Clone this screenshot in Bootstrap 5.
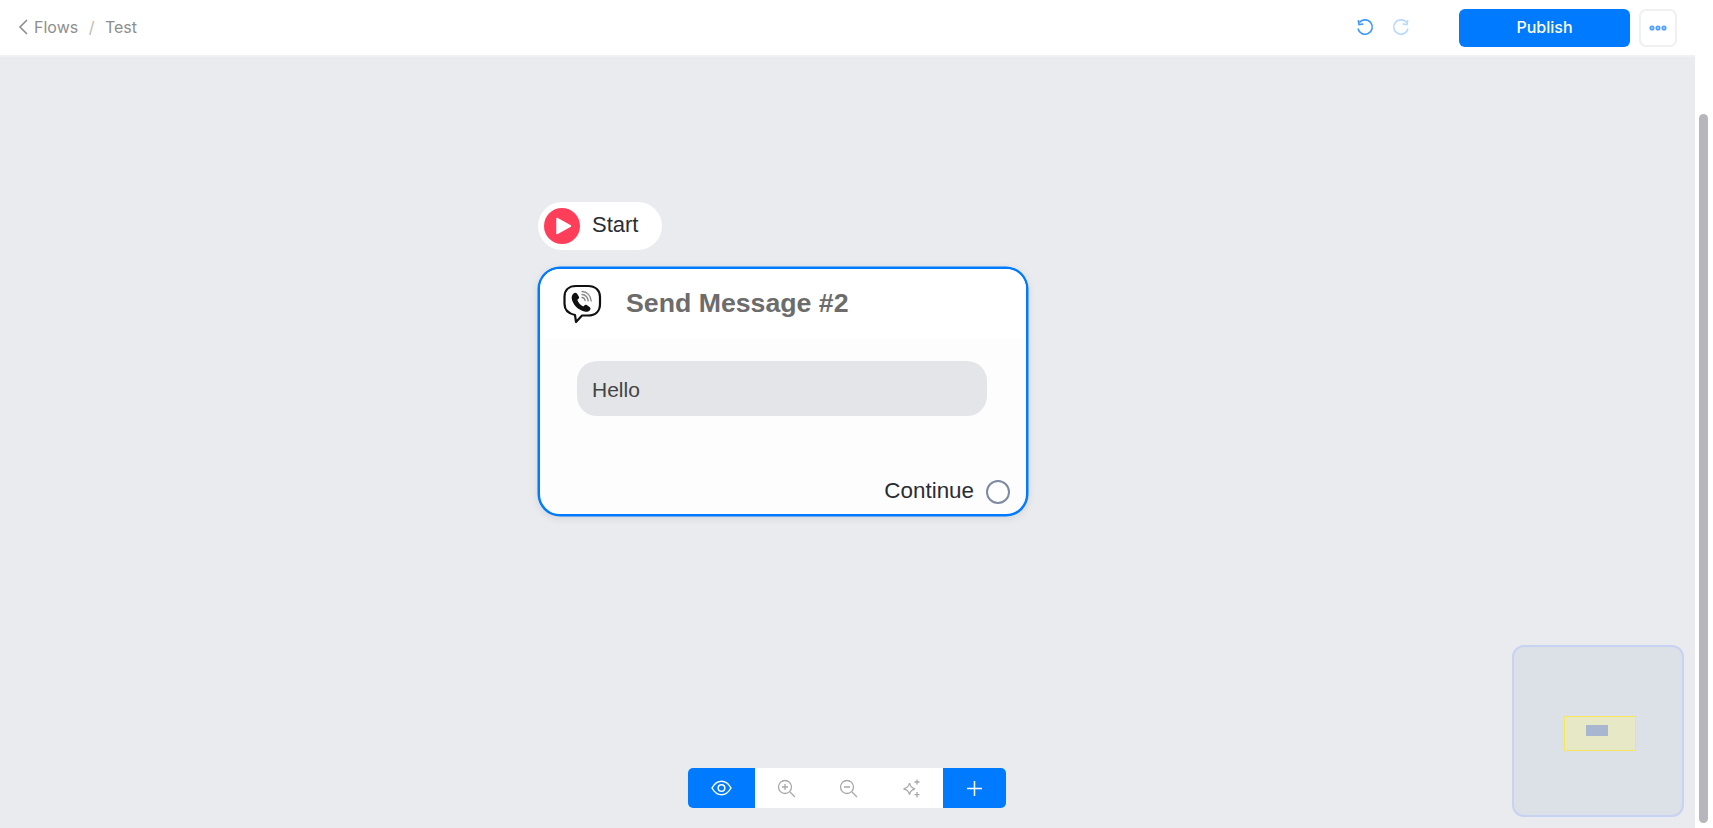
<!DOCTYPE html>
<html lang="en">

<head>
    <meta charset="UTF-8">
    <meta name="viewport" content="width=device-width, initial-scale=1.0">
    <title>Flows - Test</title>
    <link href="https://cdn.jsdelivr.net/npm/bootstrap@5.3.3/dist/css/bootstrap.min.css" rel="stylesheet" crossorigin="anonymous">
    <style>
        body {
            font-family: "Liberation Sans", Arial, sans-serif;
            background-color: #fff;
            overflow: hidden;
        }

        .page-wrap {
            height: 828px;
        }

        .top-bar {
            height: 57px;
            background-color: #fff;
            border-bottom: 2px solid #f1f1f3;
            padding-right: 36px;
        }

        .crumb {
            font-family: Inter, "Liberation Sans", sans-serif;
            font-size: 16px;
            color: #8e8e8e;
            padding-left: 18px;
            padding-bottom: 1px;
        }

        .crumb-back {
            margin-right: 6px;
        }

        .crumb-sep {
            color: #bbb;
            margin: 0 10.500px;
        }

        .history-btns {
            gap: 18px;
            margin-right: 49px;
        }

        .publish-btn {
            width: 171px;
            height: 38px;
            background-color: #007bff;
            color: #fff;
            border: none;
            border-radius: 6px;
            font-family: Inter, "Liberation Sans", sans-serif;
            font-size: 16px;
            font-weight: 500;
            padding: 0 0 2px;
        }

        .more-btn {
            width: 38px;
            height: 38px;
            background-color: #fff;
            border: 2px solid #eef0f3;
            border-radius: 7px;
            padding: 0;
            margin-left: 9px;
        }

        .flow-canvas {
            background-color: #e9ebef;
        }

        .start-node {
            position: absolute;
            left: 538px;
            top: 145px;
            width: 124px;
            height: 48px;
            background-color: #fff;
            border-radius: 24px;
            padding-left: 6px;
            padding-bottom: 4px;
            font-size: 22px;
            color: #2a2d33;
        }

        .start-dot {
            width: 36px;
            height: 36px;
            margin-right: 12px;
            margin-top: 4px;
        }

        .msg-node {
            position: absolute;
            left: 538px;
            top: 210px;
            width: 490px;
            height: 249px;
            background-color: #fdfdfd;
            border: 2px solid #007bff;
            border-radius: 22px;
            box-shadow: 0 0 0 .5px #007bff, 0 2px 8px rgba(0, 0, 0, .1);
        }

        .msg-head {
            padding: 15px 0 0 22px;
            height: 69px;
            background-color: #fff;
            border-radius: 20px 20px 0 0;
        }

        .msg-title {
            font-size: 26.700px;
            font-weight: 700;
            color: #6c6c6c;
            margin-left: 24px;
            line-height: 38px;
        }

        .msg-bubble {
            margin: 23px 0 0 37px;
            width: 410px;
            height: 55px;
            background-color: #e3e5e9;
            border-radius: 20px;
            padding-left: 15px;
            padding-top: 3px;
            font-size: 21px;
            color: #444;
        }

        .msg-foot {
            margin-top: 58px;
            padding-right: 16px;
            font-size: 22.400px;
            color: #2a2d33;
        }

        .foot-label {
            padding-bottom: 2px;
        }

        .port-ring {
            width: 24px;
            height: 24px;
            border: 2px solid #7d8aa0;
            border-radius: 50%;
            background-color: #fff;
            margin-left: 12px;
        }

        .tool-strip {
            position: absolute;
            left: 688px;
            top: 711px;
            width: 318px;
            height: 40px;
            background-color: #fff;
            border-radius: 5px;
            overflow: hidden;
        }

        .tool-blue {
            background-color: #007bff;
            border: none;
            padding: 0;
            height: 40px;
        }

        .tool-plain {
            background: none;
            border: none;
            padding: 0;
            width: 62.600px;
            height: 40px;
        }

        .mini-map {
            position: absolute;
            left: 1512px;
            top: 588px;
            width: 172px;
            height: 172px;
            background-color: #dce0e7;
            border: 2px solid #c8d2f2;
            border-radius: 12px;
        }

        .mini-view {
            position: absolute;
            left: 50px;
            top: 69px;
            width: 72px;
            height: 35px;
            background-color: #e6e8c6;
            border: 1px solid #f7e65c;
        }

        .mini-node {
            position: absolute;
            left: 21px;
            top: 8px;
            width: 22px;
            height: 11px;
            background-color: #a9b6cf;
        }

        .scroll-rail {
            position: absolute;
            top: 0;
            right: 0;
            width: 18px;
            height: 828px;
            background-color: #fff;
        }

        .scroll-thumb {
            position: absolute;
            left: 4px;
            top: 114px;
            width: 9px;
            height: 709px;
            background-color: #b6b6bc;
            border-radius: 5px;
        }
    </style>
</head>

<body>
    <div class="page-wrap d-flex flex-column position-relative">
        <header class="top-bar d-flex align-items-center flex-shrink-0">
            <div class="crumb d-flex align-items-center">
                <svg width="10" height="16" viewBox="0 0 10 16" fill="none" stroke="#8e8e8e" stroke-width="1.600" class="crumb-back"><path d="M9 1 2 8l7 7"/></svg>
                <span>Flows</span><span class="crumb-sep">/</span><span>Test</span>
            </div>
            <div class="ms-auto d-flex align-items-center">
                <div class="history-btns d-flex align-items-center">
                    <svg width="18" height="18" viewBox="0 0 18 18" fill="none" stroke="#3f97ff" stroke-width="1.600"><path d="M3.400 3.600A7.200 7.200 0 1 1 2 9.500"/><path d="M2.300 1.200 3 5.600l4.400-.6"/></svg>
                    <svg width="18" height="18" viewBox="0 0 18 18" fill="none" stroke="#b6d8ff" stroke-width="1.600"><path d="M14.600 3.600A7.200 7.200 0 1 0 16 9.500"/><path d="M15.700 1.200 15 5.600l-4.400-.6"/></svg>
                </div>
                <button class="publish-btn" type="button">Publish</button>
                <button class="more-btn d-flex align-items-center justify-content-center" type="button">
                    <svg width="18" height="6" viewBox="0 0 18 6" fill="#a9cfff" stroke="#4f9fff" stroke-width="1.500"><circle cx="3" cy="3" r="1.800"/><circle cx="9" cy="3" r="1.800"/><circle cx="15" cy="3" r="1.800"/></svg>
                </button>
            </div>
        </header>

        <main class="flow-canvas flex-grow-1 position-relative">
            <div class="start-node d-flex align-items-center">
                <svg class="start-dot" viewBox="0 0 36 36"><circle cx="18" cy="18" r="18" fill="#ff3f5a"/><path d="M13 10.500 26.500 18 13 25.500z" fill="#fff" stroke="#fff" stroke-width="1.500" stroke-linejoin="round"/></svg>
                <span>Start</span>
            </div>

            <div class="msg-node">
                <div class="msg-head d-flex align-items-start">
                    <svg width="40" height="41" viewBox="0 0 40 41" fill="none">
                        <path d="M14 2h12c7.500 0 12 4.500 12 11v7c0 7-4.500 11.500-12 11.500h-6l-6 6.500-1-7C6 29.500 2.500 26 2.500 20V13C2.500 6.500 6.500 2 14 2z" stroke="#111" stroke-width="2.200" stroke-linejoin="round"/>
                        <path d="M11.500 9.500c1.500-1.200 2.800-1 3.600.2l1.700 2.700c.6 1 .3 1.900-.5 2.600l-1 .8c.9 2.900 3.100 5.400 6 6.700l1-1c.8-.8 1.800-.9 2.700-.3l2.600 1.900c1.200.9 1.200 2.200.1 3.300-1.100 1.200-2.700 1.700-4.300 1.300C16 26.500 10.300 20 9.700 14.300c-.2-1.900.5-3.600 1.800-4.800z" fill="#111"/>
                        <path d="M20 7.500c5 .3 8.700 4 9.200 9.500M20 10.500c3.400.3 5.700 2.700 6.200 6.300M20 13.500c1.700.2 2.900 1.400 3.100 3.100" stroke="#8a8a8a" stroke-width="1.300" stroke-linecap="round"/>
                    </svg>
                    <span class="msg-title">Send Message #2</span>
                </div>
                <div class="msg-bubble d-flex align-items-center">Hello</div>
                <div class="msg-foot d-flex align-items-center justify-content-end">
                    <span class="foot-label">Continue</span>
                    <span class="port-ring"></span>
                </div>
            </div>

            <div class="tool-strip d-flex">
                <button class="tool-blue d-flex align-items-center justify-content-center" style="width: 67px" type="button">
                    <svg width="21" height="16" viewBox="0 0 21 16" fill="none" stroke="#fff" stroke-width="1.500"><path d="M1 8c2.500-4.500 5.500-6.700 9.500-6.700S17.500 3.500 20 8c-2.500 4.500-5.500 6.700-9.500 6.700S3.500 12.500 1 8z"/><circle cx="10.500" cy="8" r="3.300"/></svg>
                </button>
                <button class="tool-plain d-flex align-items-center justify-content-center" type="button">
                    <svg width="19" height="19" viewBox="0 0 19 19" fill="none" stroke="#a8a8a8" stroke-width="1.300"><circle cx="8" cy="8" r="6.500"/><path d="M13 13l5 5M5 8h6M8 5v6"/></svg>
                </button>
                <button class="tool-plain d-flex align-items-center justify-content-center" type="button">
                    <svg width="19" height="19" viewBox="0 0 19 19" fill="none" stroke="#a8a8a8" stroke-width="1.300"><circle cx="8" cy="8" r="6.500"/><path d="M13 13l5 5M5 8h6"/></svg>
                </button>
                <button class="tool-plain d-flex align-items-center justify-content-center" type="button">
                    <svg width="19" height="19" viewBox="0 0 19 19" fill="none" stroke="#a8a8a8" stroke-width="1.300"><path d="M7.500 4c.7 3.600 2.200 5 5.500 5.800-3.300.8-4.800 2.200-5.500 5.800C6.800 12 5.300 10.600 1.500 9.800 5.300 9 6.800 7.600 7.500 4z"/><path d="M15 .5v5M12.500 3h5M15 13v5.500M12.500 15.700h5"/></svg>
                </button>
                <button class="tool-blue flex-grow-1 d-flex align-items-center justify-content-center" type="button">
                    <svg width="15" height="15" viewBox="0 0 15 15" fill="none" stroke="#fff" stroke-width="1.500"><path d="M7.500 0v15M0 7.500h15"/></svg>
                </button>
            </div>

            <div class="mini-map">
                <div class="mini-view">
                    <div class="mini-node"></div>
                </div>
            </div>
        </main>

        <div class="scroll-rail">
            <div class="scroll-thumb"></div>
        </div>
    </div>

    <script src="https://cdn.jsdelivr.net/npm/bootstrap@5.3.3/dist/js/bootstrap.bundle.min.js" crossorigin="anonymous"></script>
</body>

</html>
